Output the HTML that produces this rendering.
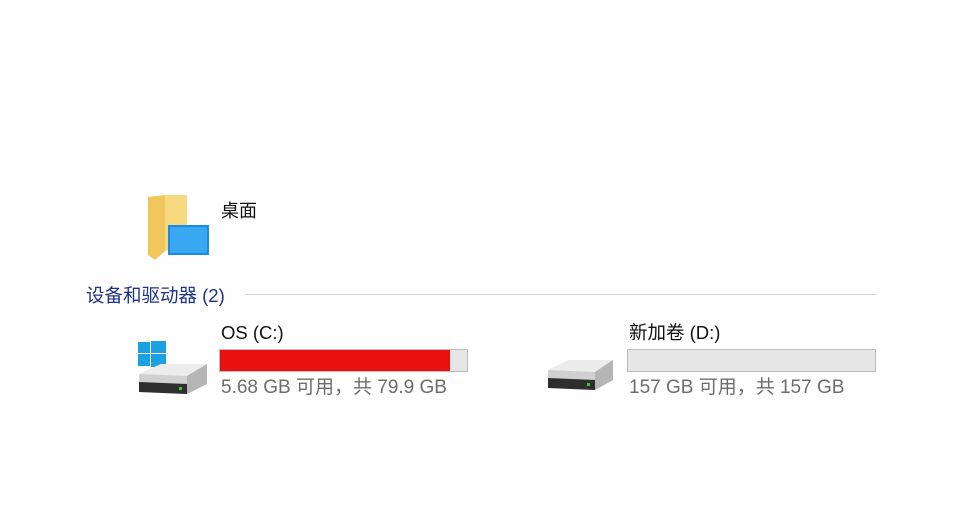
<!DOCTYPE html>
<html><head><meta charset="utf-8"><style>
body{margin:0;width:962px;height:525px;background:#fff;position:relative;overflow:hidden;font-family:"Liberation Sans","Noto Sans CJK SC",sans-serif}
.a{position:absolute;white-space:nowrap;line-height:22px}
</style></head><body>
<div class="a" style="left:78px;top:165px;width:798px;height:360px;background:#fefefe"></div>
<svg class="a" style="left:145px;top:193px" width="66" height="70">
<path d="M3 4 L20 2 L20 58 L10 67 L3 62 Z" fill="#f0c75a"/>
<path d="M20 2 L42 2 L42 52 L20 58Z" fill="#f7da80"/>
<rect x="23" y="32" width="41" height="30" fill="#1a8be0"/>
<rect x="25" y="34" width="37" height="26" fill="#3aa7f2"/>
</svg>
<div class="a" style="left:221px;top:200px;font-size:18px;color:#111">桌面</div>
<div class="a" style="left:86px;top:285px;font-size:18.5px;color:#1e3287">设备和驱动器 (2)</div>
<div class="a" style="left:245px;top:294px;width:631px;height:1px;background:#d0d0d0"></div>
<svg class="a" style="left:135px;top:340px" width="76" height="56">
<rect x="3" y="2" width="12" height="11" fill="#1ba1e2"/><rect x="16" y="1" width="15" height="12" fill="#1ba1e2"/>
<rect x="3" y="14" width="12" height="12" fill="#1ba1e2"/><rect x="16" y="14" width="15" height="13" fill="#1ba1e2"/>
<path d="M4 34 L26 24 L72 24 L72 44 L52 54 L4 52 Z" fill="#d0d0d0"/>
<path d="M4 34 L52 36 L72 24 L26 24Z" fill="#ececec"/>
<path d="M4 42 L52 44 L52 54 L4 52Z" fill="#2e2e2e"/>
<path d="M52 36 L72 24 L72 44 L52 54Z" fill="#b5b5b5"/>
<rect x="44" y="47" width="3" height="3" fill="#3c3"/>
</svg>
<div class="a" style="left:221px;top:322px;font-size:18.5px;color:#111">OS (C:)</div>
<div class="a" style="left:219px;top:349px;width:247px;height:21px;background:#e6e6e6;border:1px solid #bcbcbc"></div>
<div class="a" style="left:220px;top:350px;width:230px;height:21px;background:#e81010"></div>
<div class="a" style="left:221px;top:377px;font-size:19px;color:#6d6d6d">5.68 GB 可用，共 79.9 GB</div>
<svg class="a" style="left:545px;top:358px" width="72" height="36">
<path d="M3 12 L24 2 L68 2 L68 22 L50 32 L3 30 Z" fill="#d0d0d0"/>
<path d="M3 12 L50 14 L68 2 L24 2Z" fill="#ececec"/>
<path d="M3 20 L50 22 L50 32 L3 30Z" fill="#2e2e2e"/>
<path d="M50 14 L68 2 L68 22 L50 32Z" fill="#b5b5b5"/>
<rect x="42" y="25" width="3" height="3" fill="#3c3"/>
</svg>
<div class="a" style="left:629px;top:322px;font-size:18.5px;color:#111">新加卷 (D:)</div>
<div class="a" style="left:627px;top:349px;width:247px;height:21px;background:#e6e6e6;border:1px solid #bcbcbc"></div>
<div class="a" style="left:629px;top:377px;font-size:19px;color:#6d6d6d">157 GB 可用，共 157 GB</div>
</body></html>
